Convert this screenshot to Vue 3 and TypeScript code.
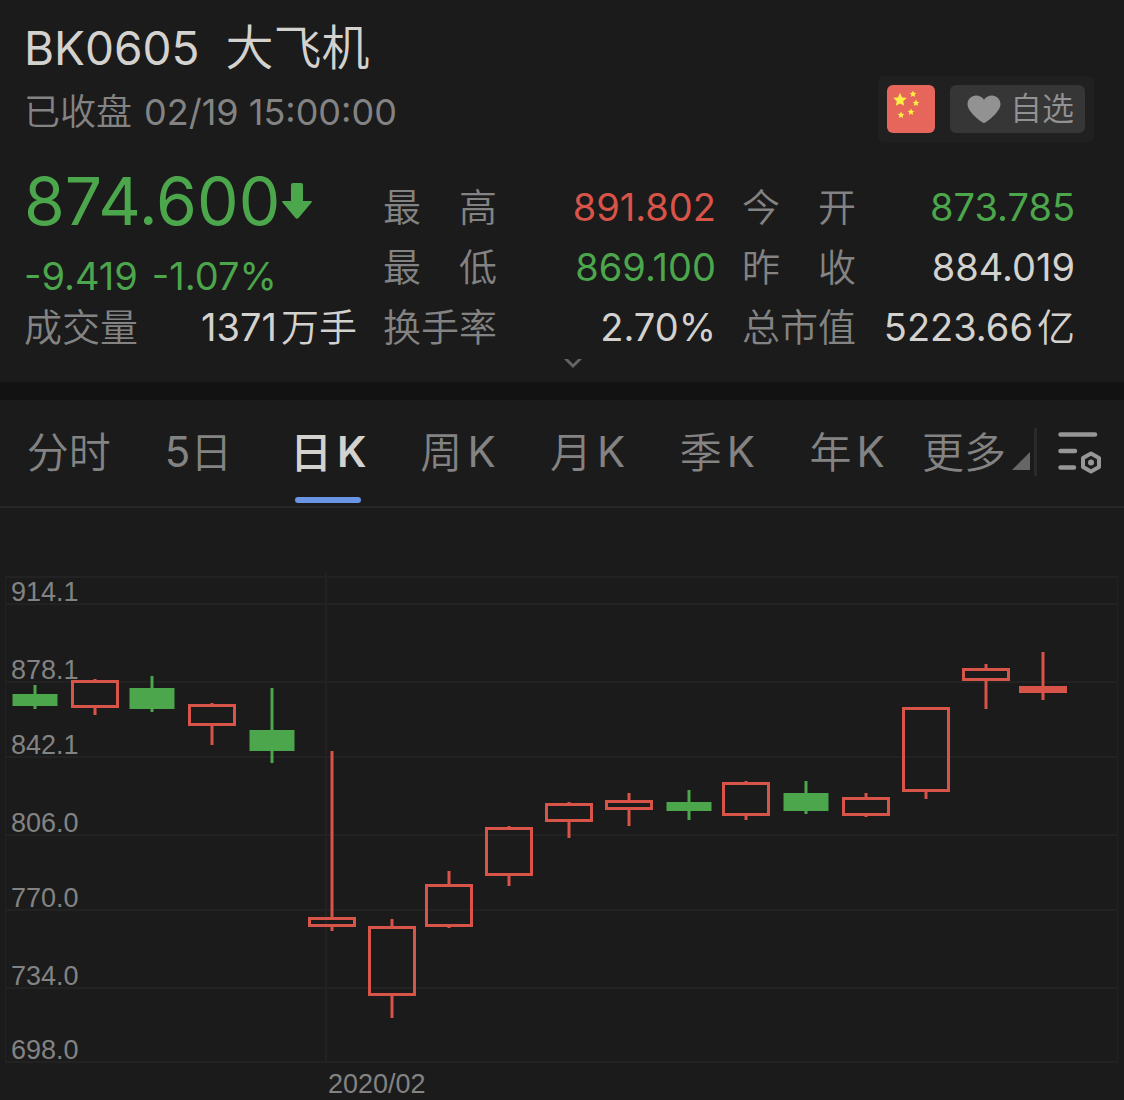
<script setup lang="ts">
import { ref } from 'vue'

type Tone = 'up' | 'down' | 'flat'

interface Stat {
  label: string[]
  value: string
  unit?: string
  tone: Tone
}

interface Tab {
  id: string
  parts: string[]
}

interface Candle {
  x: number
  high: number
  top: number
  bottom: number
  low: number
  up: boolean
}

const volume: Stat = { label: ['成', '交', '量'], value: '1371', unit: '万手', tone: 'flat' }

const stats: Stat[] = [
  { label: ['最', '高'], value: '891.802', tone: 'up' },
  { label: ['今', '开'], value: '873.785', tone: 'down' },
  { label: ['最', '低'], value: '869.100', tone: 'down' },
  { label: ['昨', '收'], value: '884.019', tone: 'flat' },
  { label: ['换', '手', '率'], value: '2.70%', tone: 'flat' },
  { label: ['总', '市', '值'], value: '5223.66', unit: '亿', tone: 'flat' },
]

const tabs: Tab[] = [
  { id: 'minute', parts: ['分时'] },
  { id: 'five-day', parts: ['5', '日'] },
  { id: 'day', parts: ['日', 'K'] },
  { id: 'week', parts: ['周', 'K'] },
  { id: 'month', parts: ['月', 'K'] },
  { id: 'quarter', parts: ['季', 'K'] },
  { id: 'year', parts: ['年', 'K'] },
]
const active = ref('day')

const isHan = (text: string) => /\p{Script=Han}/u.test(text)

const rows = [
  { y: 96, label: '914.1' },
  { y: 174, label: '878.1' },
  { y: 249, label: '842.1' },
  { y: 327, label: '806.0' },
  { y: 402, label: '770.0' },
  { y: 480, label: '734.0' },
  { y: 554, label: '698.0' },
]

const candles: Candle[] = [
  { x: 35, high: 177, top: 186, bottom: 198, low: 201, up: false },
  { x: 95, high: 171, top: 172, bottom: 200, low: 207, up: true },
  { x: 152, high: 168, top: 180, bottom: 201, low: 204, up: false },
  { x: 212, high: 195, top: 196, bottom: 218, low: 237, up: true },
  { x: 272, high: 180, top: 222, bottom: 243, low: 255, up: false },
  { x: 332, high: 243, top: 409, bottom: 419, low: 423, up: true },
  { x: 392, high: 411, top: 418, bottom: 488, low: 510, up: true },
  { x: 449, high: 363, top: 376, bottom: 419, low: 420, up: true },
  { x: 509, high: 318, top: 319, bottom: 368, low: 378, up: true },
  { x: 569, high: 294, top: 295, bottom: 314, low: 330, up: true },
  { x: 629, high: 285, top: 292, bottom: 302, low: 318, up: true },
  { x: 689, high: 282, top: 294, bottom: 303, low: 312, up: false },
  { x: 746, high: 273, top: 274, bottom: 308, low: 312, up: true },
  { x: 806, high: 273, top: 285, bottom: 303, low: 306, up: false },
  { x: 866, high: 285, top: 289, bottom: 308, low: 309, up: true },
  { x: 926, high: 199, top: 199, bottom: 284, low: 291, up: true },
  { x: 986, high: 156, top: 160, bottom: 173, low: 201, up: true },
  { x: 1043, high: 144, top: 178, bottom: 185, low: 192, up: true },
]

const star = '0,-10 2.8,-3.6 9.5,-3.1 4.4,1.6 5.9,8.1 0,4.800 -5.9,8.1 -4.4,1.6 -9.5,-3.1 -2.8,-3.6'
const stars = [
  { x: 13, y: 15, s: 0.72 },
  { x: 26, y: 9, s: 0.36 },
  { x: 29, y: 18, s: 0.36 },
  { x: 24, y: 27, s: 0.36 },
  { x: 14, y: 30, s: 0.36 },
]
</script>

<template>
  <main class="page">
    <header class="quote">
      <div class="heading">
        <div>
          <h1 class="title"><span>BK0605</span><span class="name han">大飞机</span></h1>
          <p class="status"><span class="han">已收盘</span><span>02/19 15:00:00</span></p>
        </div>
        <div class="actions">
          <svg class="flag" viewBox="0 0 48 48" role="img" aria-label="中国">
            <rect width="48" height="48" rx="6" fill="#e6665b" />
            <polygon
              v-for="(p, i) in stars"
              :key="i"
              :points="star"
              :transform="`translate(${p.x} ${p.y}) scale(${p.s})`"
              fill="#fbee45"
            />
          </svg>
          <button type="button" class="favorite">
            <svg class="heart" viewBox="0 0 34 28" aria-hidden="true">
              <path
                d="M17 28C15.500 28 0.500 17 0.500 9.200C0.500 4 4.500 0.500 9 0.500C12.500 0.500 15.500 2.300 17 4.700C18.500 2.300 21.500 0.500 25 0.500C29.500 0.500 33.500 4 33.500 9.200C33.500 17 18.500 28 17 28Z"
                fill="#929292"
              />
            </svg>
            <span class="han">自选</span>
          </button>
        </div>
      </div>

      <div class="figures">
        <div class="headline down">
          <div class="price">
            <span>874.600</span>
            <svg class="arrow" viewBox="0 0 30 36" aria-hidden="true">
              <path
                d="M11 0H19Q21 0 21 2V18H29Q30.500 18 29.500 19.500L16.500 35Q15 36.500 13.500 35L0.500 19.500Q-0.500 18 1 18H9V2Q9 0 11 0Z"
                fill="currentColor"
              />
            </svg>
          </div>
          <div class="change"><span>-9.419</span><span>-1.07%</span></div>
        </div>
        <div class="stat volume">
          <span class="label han"><span v-for="c in volume.label" :key="c">{{ c }}</span></span>
          <span class="value flat">{{ volume.value }}<span class="han">{{ volume.unit }}</span></span>
        </div>
        <div v-for="s in stats" :key="s.label.join('')" class="stat">
          <span class="label han"><span v-for="c in s.label" :key="c">{{ c }}</span></span>
          <span class="value" :class="s.tone">{{ s.value }}<span v-if="s.unit" class="han">{{ s.unit }}</span></span>
        </div>
      </div>

      <button type="button" class="expand" aria-label="展开">
        <svg width="18" height="12" viewBox="0 0 18 12" aria-hidden="true">
          <path d="M0 2H4L9 7L14 2H18L9 11Z" fill="#646464" />
        </svg>
      </button>
    </header>

    <nav class="periods">
      <div class="tabs" role="tablist">
        <button
          v-for="t in tabs"
          :key="t.id"
          type="button"
          role="tab"
          class="tab"
          :class="{ active: active === t.id }"
          :aria-selected="active === t.id"
          @click="active = t.id"
        >
          <span v-for="p in t.parts" :key="p" :class="isHan(p) ? 'han' : 'latin'">{{ p }}</span>
        </button>
      </div>
      <button type="button" class="more">
        <span class="han">更多</span>
        <svg class="corner" viewBox="0 0 18 18" aria-hidden="true"><path d="M18 0V18H0Z" fill="#666" /></svg>
      </button>
      <button type="button" class="settings" aria-label="设置">
        <svg width="44" height="44" viewBox="0 0 44 44" fill="none" stroke="#979797" aria-hidden="true">
          <path d="M2.500 4.500H37M2.500 21H17M2.500 37.500H16" stroke-width="4.500" stroke-linecap="round" />
          <path d="M33 23.500L41 28V37L33 41.500L25 37V28Z" stroke-width="4" stroke-linejoin="round" />
          <circle cx="33" cy="32.500" r="3" fill="#979797" stroke="none" />
        </svg>
      </button>
    </nav>

    <svg class="chart" viewBox="0 0 1124 592" role="img" aria-label="日K">
      <g stroke="#222" stroke-width="2">
        <path d="M5 69H1118M326 65V554" />
        <path d="M5.500 65V554M1117.500 69V554" stroke-width="1" />
        <path v-for="r in rows" :key="r.y" :d="`M5 ${r.y}H1118`" />
      </g>
      <g class="axis">
        <text v-for="r in rows" :key="r.label" x="11" :y="r.y - 3">{{ r.label }}</text>
        <text x="328" y="585">2020/02</text>
      </g>
      <g v-for="c in candles" :key="c.x" :class="c.up ? 'up' : 'down'">
        <rect :x="c.x - 1.5" :y="c.high" width="3" :height="c.top - c.high" fill="currentColor" />
        <rect :x="c.x - 1.5" :y="c.bottom" width="3" :height="c.low - c.bottom" fill="currentColor" />
        <rect
          v-if="c.up"
          :x="c.x - 22.5"
          :y="c.top + 1.5"
          width="45"
          :height="c.bottom - c.top - 3"
          fill="none"
          stroke="currentColor"
          stroke-width="3"
        />
        <rect v-else :x="c.x - 22.5" :y="c.top" width="45" :height="c.bottom - c.top" fill="currentColor" />
      </g>
      <rect class="up" x="1021" y="180" width="44" height="3" fill="currentColor" />
    </svg>
  </main>
</template>

<style>
body {
  margin: 0;
  background: #1b1b1b;
}
</style>

<style scoped>
.page {
  background: #1b1b1b;
  color: #d4d2ce;
  font-family: Inter, "Noto Sans CJK SC", sans-serif;
  font-weight: 400;
}
button {
  margin: 0;
  padding: 0;
  border: 0;
  background: none;
  color: inherit;
  font: inherit;
  cursor: pointer;
}
svg {
  display: block;
  flex: none;
}
.han {
  font-weight: 350;
}
.up {
  color: #d95448;
}
.down {
  color: #4ca64c;
}
.flat {
  color: #d4d2ce;
}
.quote {
  padding: 18px 30px 0 24px;
  border-bottom: 18px solid #121212;
}
.heading {
  display: flex;
  justify-content: space-between;
  align-items: flex-end;
}
.title {
  display: flex;
  align-items: baseline;
  gap: 26px;
  margin: 0;
  font-size: 46px;
  line-height: 60px;
  font-weight: 400;
}
.name {
  font-size: 48px;
}
.status {
  display: flex;
  gap: 12px;
  margin: 4px 0 0;
  font-size: 36px;
  line-height: 60px;
  color: #838383;
}
.actions {
  display: flex;
  gap: 15px;
  padding: 9px;
  border-radius: 6px;
  background: #202020;
}
.flag {
  width: 48px;
  height: 48px;
}
.favorite {
  display: flex;
  align-items: center;
  gap: 9px;
  height: 48px;
  padding: 0 11px 0 17px;
  border-radius: 6px;
  background: #363636;
  color: #929292;
  font-size: 32px;
  line-height: 44px;
}
.heart {
  width: 34px;
  height: 28px;
}
.figures {
  display: grid;
  grid-template-columns: repeat(3, 1fr);
  grid-template-rows: repeat(3, 60px);
  column-gap: 26px;
  margin: 35px 19px 0 0;
}
.headline {
  grid-column: 1;
  grid-row: 1 / 3;
}
.price {
  display: flex;
  align-items: center;
  gap: 2px;
  font-size: 66px;
  line-height: 48px;
}
.arrow {
  width: 30px;
  height: 36px;
}
.change {
  display: flex;
  gap: 14px;
  margin-top: 21px;
  font-size: 38px;
  line-height: 60px;
}
.stat {
  display: flex;
  justify-content: space-between;
  font-size: 38px;
  line-height: 60px;
  white-space: nowrap;
}
.volume {
  grid-column: 1;
  grid-row: 3;
}
.label {
  display: flex;
  justify-content: space-between;
  width: 114px;
  color: #838383;
}
.value {
  display: flex;
  gap: 4px;
}
.expand {
  display: flex;
  justify-content: center;
  width: 100%;
  height: 25px;
  padding-left: 28px;
}
.periods {
  display: flex;
  align-items: stretch;
  height: 106px;
  padding-left: 4px;
  border-bottom: 2px solid #282828;
  font-size: 42px;
  color: #838383;
}
.periods .han {
  padding-bottom: 4px;
}
.tabs {
  flex: 1;
  display: grid;
  grid-template-columns: repeat(7, 1fr);
}
.tab {
  position: relative;
  display: flex;
  justify-content: center;
  align-items: center;
  padding-bottom: 4px;
  white-space: nowrap;
}
.han + .latin {
  margin-left: 5px;
}
.active,
.active .han {
  color: #d4d2ce;
  font-weight: 500;
}
.active .latin {
  font-weight: 600;
}
.active::after {
  content: "";
  position: absolute;
  left: 50%;
  bottom: 3px;
  width: 66px;
  height: 6px;
  margin-left: -33px;
  border-radius: 3px;
  background: #6a94e4;
}
.more {
  display: flex;
  align-items: center;
  gap: 6px;
  padding: 0 4px 4px 10px;
  white-space: nowrap;
}
.corner {
  width: 18px;
  height: 18px;
  margin-top: 20px;
}
.settings {
  align-self: center;
  display: flex;
  margin-bottom: 2px;
  padding: 2px 22px 2px 21px;
  border-left: 3px solid #2a2a2a;
}
.chart {
  width: 100%;
  height: auto;
}
.axis text {
  font-family: "Liberation Sans", Arial, sans-serif;
  font-size: 27px;
  fill: #838383;
}
</style>
